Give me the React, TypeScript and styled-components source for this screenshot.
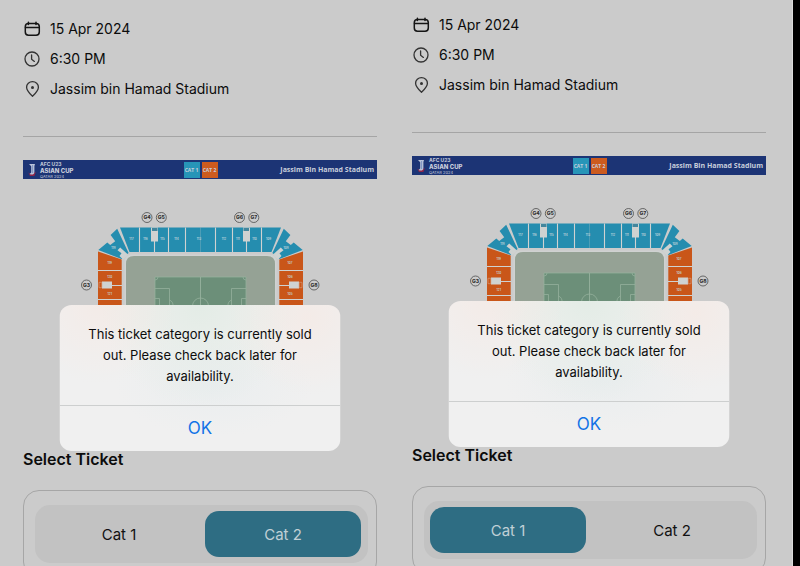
import React, { useState } from "react";
import styled, { createGlobalStyle, css } from "styled-components";

const GlobalStyle = createGlobalStyle`
  * { box-sizing: border-box; }
  body {
    margin: 0;
    background: #cbcbcb;
    color: #0c0c0c;
    font-family: Inter, "Liberation Sans", sans-serif;
  }
  button { font: inherit; border: 0; background: none; padding: 0; cursor: pointer; }
`;

const Frame = styled.div`
  display: flex;
  height: 100vh;
  overflow: hidden;
`;

const Screens = styled.main`
  flex: 1;
  display: grid;
  grid-template-columns: 1fr 1fr;
  column-gap: 35px;
  padding: 0 26px 0 23px;
  border-right: 1px solid #dcdcdc;
`;

const Edge = styled.div`
  width: 7px;
  background: #000;
`;

const Screen = styled.section<{ $top: number }>`
  padding-top: ${(p) => p.$top}px;
  min-width: 0;
`;

const Details = styled.ul`
  list-style: none;
  margin: 0;
  padding: 0;
  display: grid;
  row-gap: 10px;
`;

const Detail = styled.li`
  display: flex;
  align-items: center;
  gap: 9px;
  height: 20px;
  font-size: 14px;
  line-height: 20px;
  white-space: nowrap;

  svg { flex: none; }
`;

const Divider = styled.hr`
  margin: 37px 0 23px;
  border: 0;
  height: 1px;
  background: #a5a5a5;
`;

const Banner = styled.div`
  display: grid;
  grid-template-columns: 1fr auto 1fr;
  align-items: center;
  height: 19px;
  padding: 0 3px 0 4px;
  background: #1c3475;
  color: #c8cedb;
  font-family: "Open Sans", "Noto Sans", sans-serif;
  font-weight: 700;
`;

const Brand = styled.div`
  display: flex;
  align-items: center;
  gap: 3px;
`;

const BrandText = styled.div`
  display: grid;
  font-family: Inter, sans-serif;
  font-size: 5px;
  line-height: 6px;
  white-space: nowrap;

  strong { font-size: 6px; line-height: 7px; font-weight: 800; }
  small { font-size: 4px; line-height: 5px; font-weight: 400; }
`;

const Legend = styled.div`
  display: flex;
  gap: 2px;
`;

const LegendTile = styled.span<{ $color: string }>`
  width: 16px;
  height: 16px;
  background: ${(p) => p.$color};
  font-size: 5px;
  line-height: 16px;
  text-align: center;
  white-space: nowrap;
`;

const Venue = styled.span`
  justify-self: end;
  font-size: 7px;
  line-height: 10px;
  white-space: nowrap;
`;

const Stage = styled.div`
  position: relative;
`;

const MapDrawing = styled.svg`
  display: block;
  width: 100%;
  height: 260px;
`;

const Dialog = styled.div`
  position: absolute;
  z-index: 1;
  top: 126px;
  left: 50%;
  width: 281px;
  transform: translateX(-50%);
  border-radius: 12px;
  overflow: hidden;
  background:
    radial-gradient(circle at 14% 0, rgba(255, 220, 205, 0.25), transparent 28%),
    radial-gradient(circle at 88% 8%, rgba(255, 220, 205, 0.25), transparent 28%),
    radial-gradient(ellipse at 50% 0, rgba(215, 232, 220, 0.5), transparent 50%),
    radial-gradient(ellipse at 55% 55%, rgba(230, 236, 238, 0.6), transparent 45%),
    #f0f0f0;
`;

const Message = styled.p`
  margin: 0;
  padding: 19px 24px 18px;
  font-size: 13px;
  line-height: 21px;
  text-align: center;
`;

const Confirm = styled.button`
  display: block;
  width: 100%;
  height: 46px;
  && { border-top: 1px solid #cdcfcf; }
  && { font-size: 17px; line-height: 45px; }
  color: #1273e6;
`;

const Heading = styled.h2`
  margin: 8px 0 19px;
  font-size: 16px;
  font-weight: 600;
  line-height: 24px;
`;

const Card = styled.div`
  border: 1px solid #a6a6a6;
  border-radius: 16px;
  padding: 14px 8px 14px 11px;
`;

const Segments = styled.div`
  display: grid;
  grid-template-columns: 1fr 1fr;
  gap: 8px;
  padding: 6px 7px 6px 6px;
  border-radius: 15px;
  background: #c2c2c2;
`;

const Segment = styled.button<{ $active: boolean }>`
  height: 46px;
  border-radius: 14px;
  && { font-size: 15px; }
  color: #111;
  ${(p) =>
    p.$active &&
    css`
      && { background: #2e6d83; }
      color: #c0d0d6;
    `}
`;

const CalendarIcon = () => (
  <svg width="18" height="18" viewBox="0 0 18 18" fill="none" stroke="#151515" strokeWidth="1.5" strokeLinecap="round">
    <rect x="2.3" y="3.4" width="14" height="11.8" rx="3.2" />
    <path d="M2.5 7.6H16.1M5.4 2.3V4.5M13 2.3V4.5" />
  </svg>
);

const ClockIcon = () => (
  <svg width="18" height="18" viewBox="0 0 18 18" fill="none" stroke="#333" strokeWidth="1.3" strokeLinecap="round" strokeLinejoin="round">
    <circle cx="9" cy="9" r="7" />
    <path d="M8.6 5V9.3L11.4 11.4" />
  </svg>
);

const PinIcon = () => (
  <svg width="18" height="18" viewBox="0 0 18 18" fill="none" stroke="#333" strokeWidth="1.3" strokeLinejoin="round">
    <path d="M9.5 16.2C7.6 14.4 3.6 11 3.6 7.3A5.9 5.6 0 0 1 15.4 7.3C15.4 11 11.4 14.4 9.5 16.2Z" />
    <circle cx="9.5" cy="7.5" r="1.5" fill="#333" stroke="none" />
  </svg>
);

const CupLogo = () => (
  <svg width="10" height="14" viewBox="0 0 10 14">
    <path d="M0.6 8C2 11.6 5 12.4 9 8.4L7.4 13H3Z" fill="#8d2447" />
    <path d="M2 1H8L7.4 3V9C7.4 11.5 5 12.3 2.6 11L4.2 9.6V3.2Z" fill="#b9c3d9" />
    <path d="M5.6 2V10" stroke="#6d86bd" strokeWidth="0.8" />
  </svg>
);

const BG = "#cbcbcb";
const GAP = "#cfd2d1";
const BLUE = "#258daf";
const ORANGE = "#c95619";

const StandHalf = () => (
  <g>
    <path d="M120 227.5H200.5V252H129.5Z" fill={BLUE} />
    <path d="M139.5 227.5V252M154.5 241V252M168.5 227.5V252M185.5 227.5V252" stroke={GAP} strokeWidth="1.1" />
    <rect x="151" y="227.5" width="7" height="14" fill={GAP} />
    <rect x="152" y="228" width="5.5" height="3" fill="#43869d" />
    <path d="M117.2 228.7L128.6 253L121.5 259L98.3 250L107.3 242.6L110.2 245L115.2 241.2L112.8 238L110.6 235Z" fill={BLUE} />
    <path d="M117.5 250.3L120.2 247.5L128 254.5L123 259.5L119.5 256L121.5 253.3Z" fill={GAP} />
    <path d="M98 251.5L121.7 259.5V310H98Z" fill={ORANGE} />
    <path d="M98 270.5H122M112 285.5H122M98 299.5H122" stroke={GAP} strokeWidth="1.1" />
    <rect x="102" y="281.5" width="10" height="7" fill={GAP} />
    <path d="M99 282.3H101.8V287.7H99Z" fill="none" stroke="#d69a79" strokeWidth="0.7" />
  </g>
);

const PitchHalf = () => (
  <g fill="none" stroke="#94b09c" strokeWidth="0.8">
    <path d="M200.5 277H155V306M155 288.5H169.5V306M155 298.5H159.5V306M155 280A3 3 0 0 0 158 277M169.5 300A6 6 0 0 1 173 306" />
    <path d="M200.5 277V306M192.5 306A8 8 0 0 1 200.5 298" />
  </g>
);

const gates: [string, number, number][] = [
  ["G4", 147, 217.5],
  ["G5", 161.3, 217.5],
  ["G6", 239.5, 217.5],
  ["G7", 253.8, 217.5],
  ["G3", 86.5, 285],
  ["G8", 314, 285],
];

const blocks: [string, number, number][] = [
  ["117", 131.5, 239],
  ["116", 145.5, 239],
  ["115", 162.5, 239],
  ["114", 176.5, 239],
  ["113", 199, 239],
  ["112", 224, 239],
  ["111", 237.8, 239],
  ["110", 254.5, 239],
  ["109", 268.5, 239],
  ["118", 113.5, 248],
  ["108", 286, 248],
  ["119", 109.8, 263],
  ["120", 109.8, 277],
  ["121", 109.8, 294],
  ["107", 290, 263],
  ["106", 290, 277],
  ["105", 290, 294],
];

const StadiumMap = () => (
  <MapDrawing viewBox="23 179 354 260" role="img" aria-label="Stadium seating map">
    <StandHalf />
    <g transform="translate(401 0) scale(-1 1)">
      <StandHalf />
    </g>
    <path d="M124.5 330V262Q124.5 254.5 132 254.5H269Q276.5 254.5 276.5 262V330Z" fill={GAP} />
    <path d="M126 330V264Q126 256 134 256H267Q275 256 275 264V330Z" fill="#95a295" />
    <rect x="155" y="277" width="91" height="53" fill="#6c8f79" />
    <PitchHalf />
    <g transform="translate(401 0) scale(-1 1)">
      <PitchHalf />
    </g>
    {blocks.map(([label, x, y]) => (
      <text key={label} x={x} y={y + 1.2} fontSize="3" fontWeight="600" fill="#c4d8de" textAnchor="middle">
        {label}
      </text>
    ))}
    {gates.map(([label, x, y]) => (
      <g key={label}>
        <circle cx={x} cy={y} r="5" fill={BG} stroke="#4c4c4c" strokeWidth="0.8" />
        <text x={x} y={y + 1.8} fontSize="5" fontWeight="800" fill="#333" textAnchor="middle">
          {label}
        </text>
      </g>
    ))}
  </MapDrawing>
);

const categories = ["Cat 1", "Cat 2"];

function TicketScreen({ top, initial }: { top: number; initial: string }) {
  const [selected, setSelected] = useState(initial);
  const [open, setOpen] = useState(true);
  return (
    <Screen $top={top}>
      <Details>
        <Detail><CalendarIcon />15 Apr 2024</Detail>
        <Detail><ClockIcon />6:30 PM</Detail>
        <Detail><PinIcon />Jassim bin Hamad Stadium</Detail>
      </Details>
      <Divider />
      <Banner>
        <Brand>
          <CupLogo />
          <BrandText>
            <span>AFC U23</span>
            <strong>ASIAN CUP</strong>
            <small>QATAR 2024</small>
          </BrandText>
        </Brand>
        <Legend>
          <LegendTile $color="#2795b8">CAT 1</LegendTile>
          <LegendTile $color="#cc5b1f">CAT 2</LegendTile>
        </Legend>
        <Venue>Jassim Bin Hamad Stadium</Venue>
      </Banner>
      <Stage>
        <StadiumMap />
        {open && (
          <Dialog role="alertdialog" aria-label="Ticket availability">
            <Message>This ticket category is currently sold out. Please check back later for availability.</Message>
            <Confirm type="button" onClick={() => setOpen(false)}>OK</Confirm>
          </Dialog>
        )}
      </Stage>
      <Heading>Select Ticket</Heading>
      <Card>
        <Segments role="group" aria-label="Ticket category">
          {categories.map((name) => (
            <Segment
              key={name}
              type="button"
              $active={name === selected}
              aria-pressed={name === selected}
              onClick={() => {
                setSelected(name);
                setOpen(true);
              }}
            >
              {name}
            </Segment>
          ))}
        </Segments>
      </Card>
    </Screen>
  );
}

export default function App() {
  return (
    <>
      <GlobalStyle />
      <Frame>
        <Screens>
          <TicketScreen top={19} initial="Cat 2" />
          <TicketScreen top={15} initial="Cat 1" />
        </Screens>
        <Edge />
      </Frame>
    </>
  );
}
